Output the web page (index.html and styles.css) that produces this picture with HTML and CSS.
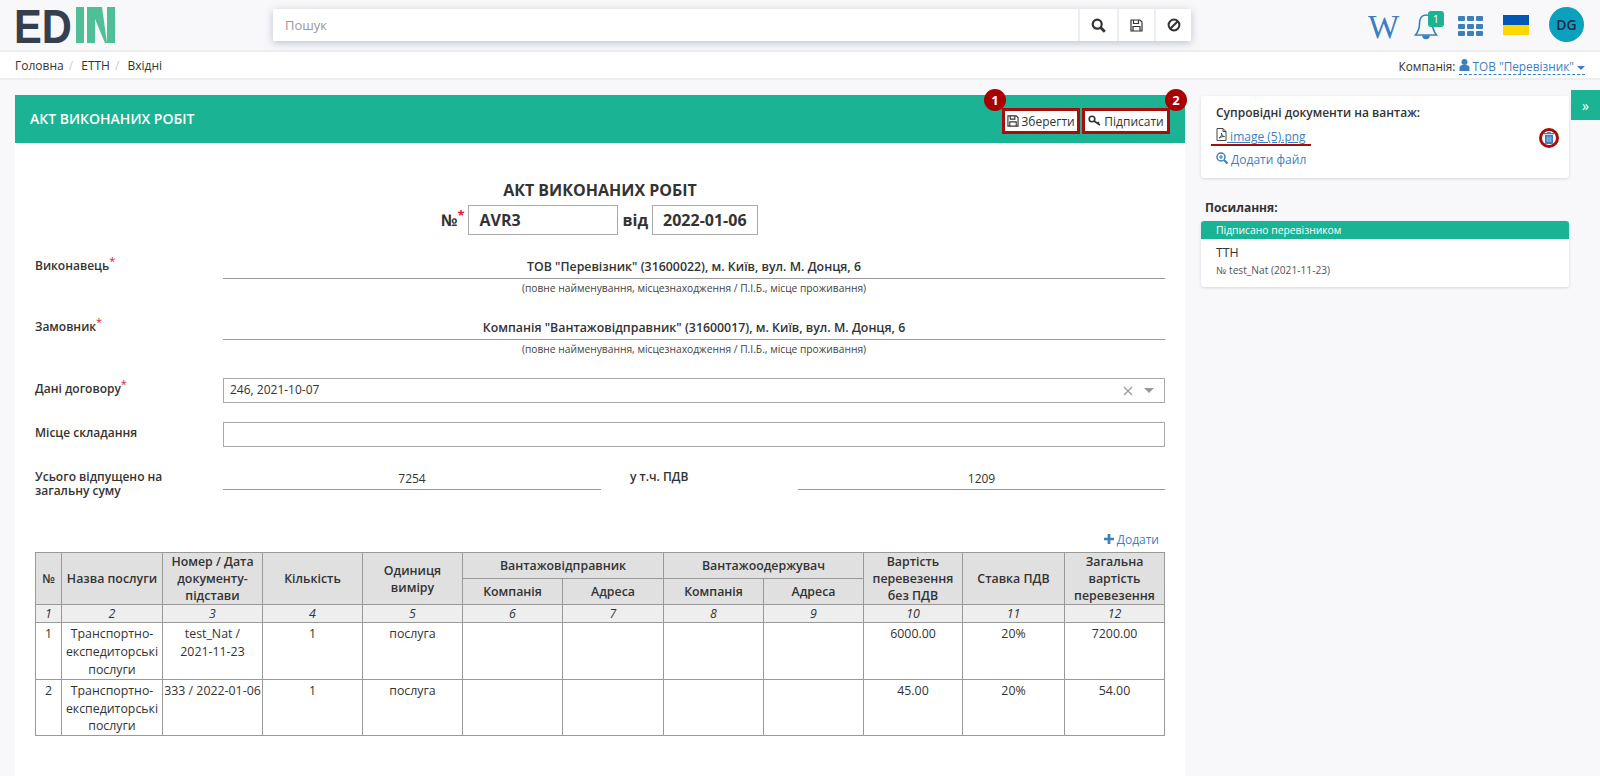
FILE: index.html
```html
<!DOCTYPE html>
<html lang="uk">

<head>
    <meta charset="UTF-8">
    <meta name="viewport" content="width=device-width, initial-scale=1.0">
    <title>Акт виконаних робіт</title>
    <link rel="stylesheet" href="styles.css">
</head>

<body>
    <header class="topbar">
        <div class="logo">
            <span class="logo-text">ED</span>
            <svg width="39" height="36" viewBox="0 0 39 36" fill="#4fbf97">
                <rect x="0" y="0" width="8" height="36"></rect>
                <rect x="11" y="0" width="8" height="36"></rect>
                <polygon points="19,0 26,0 31,36 29,36 19,12"></polygon>
                <rect x="31" y="0" width="8" height="36"></rect>
            </svg>
        </div>
        <div class="search">
            <input class="search-input" type="text" placeholder="Пошук">
            <button class="search-btn btn-find">
                <svg width="15" height="15" viewBox="0 0 15 15" fill="none" stroke="#333" stroke-width="2.2"><circle cx="6.2" cy="6.2" r="4.5"></circle><path d="M9.6 9.6l4.2 4.2" stroke-width="2.8"></path></svg>
            </button>
            <button class="search-btn">
                <svg width="13" height="13" viewBox="0 0 13 13" fill="none" stroke="#333" stroke-width="1.2"><path d="M1 1h9l2 2v9H1z"></path><path d="M3.5 1v3.5h5V1M3 12V7.5h7V12"></path></svg>
            </button>
            <button class="search-btn">
                <svg width="14" height="14" viewBox="0 0 14 14" fill="none" stroke="#333" stroke-width="2"><circle cx="7" cy="7" r="5.4"></circle><path d="M3.2 10.8l7.6-7.6"></path></svg>
            </button>
        </div>
        <div class="top-icons">
            <span class="wiki">W</span>
            <span class="bell">
                <svg width="24" height="27" viewBox="0 0 24 27" fill="none" stroke="#3b7fbf" stroke-width="1.6"><path d="M12 1c-4.5 0-6.5 4-6.5 8.5 0 6-2 9-4 11.5h21c-2-2.5-4-5.5-4-11.500C18.5 5 16.5 1 12 1z"></path><path d="M9 21.5a3 3 0 0 0 6 0" fill="#3b7fbf"></path></svg>
                <span class="bell-badge">1</span>
            </span>
            <span class="apps">
                <i></i><i></i><i></i><i></i><i></i><i></i><i></i><i></i><i></i>
            </span>
            <span class="flag"></span>
            <span class="avatar">DG</span>
        </div>
    </header>

    <nav class="crumbs">
        <div class="crumb-list">
            <span>Головна</span><span class="sep">/</span>
            <span>ЕТТН</span><span class="sep">/</span>
            <span>Вхідні</span>
        </div>
        <div class="company">
            Компанія:
            <span class="company-link">
                <svg width="11" height="12" viewBox="0 0 11 12" fill="#3b7fbf"><circle cx="5.5" cy="3" r="3"></circle><path d="M0.5 12V9c0-2 1.5-3 3-3h4c1.5 0 3 1 3 3v3z"></path></svg>
                ТОВ "Перевізник"
                <span class="caret"></span>
            </span>
        </div>
    </nav>

    <main class="page">
        <section class="panel">
            <div class="panel-head">
                <h2>АКТ ВИКОНАНИХ РОБІТ</h2>
                <div class="actions">
                    <button class="act-btn btn-save">
                        <svg width="12" height="12" viewBox="0 0 13 13" fill="none" stroke="#333" stroke-width="1.2"><path d="M1 1h9l2 2v9H1z"></path><path d="M3.5 1v3.5h5V1M3 12V7.5h7V12"></path></svg>
                        Зберегти
                        <span class="mark mark-one">1</span>
                    </button>
                    <button class="act-btn btn-sign">
                        <svg width="14" height="12" viewBox="0 0 14 12" fill="none" stroke="#333" stroke-width="1.6"><circle cx="4" cy="4" r="2.8"></circle><path d="M6 6l6 4M9.5 8.3L11 7"></path></svg>
                        Підписати
                        <span class="mark mark-two">2</span>
                    </button>
                </div>
            </div>

            <div class="form">
                <h1 class="doc-title">АКТ ВИКОНАНИХ РОБІТ</h1>
                <div class="doc-number">
                    <span>№<sup class="req">*</sup></span>
                    <span class="num-box num-wide">AVR3</span>
                    <span>від</span>
                    <span class="num-box">2022-01-06</span>
                </div>

                <div class="row party">
                    <label class="row-label">Виконавець<sup class="req">*</sup></label>
                    <div class="row-field">
                        <div class="party-name">ТОВ "Перевізник" (31600022), м. Київ, вул. М. Донця, 6</div>
                        <div class="hint">(повне найменування, місцезнаходження / П.І.Б., місце проживання)</div>
                    </div>
                </div>
                <div class="row party">
                    <label class="row-label">Замовник<sup class="req">*</sup></label>
                    <div class="row-field">
                        <div class="party-name">Компанія "Вантажовідправник" (31600017), м. Київ, вул. М. Донця, 6</div>
                        <div class="hint">(повне найменування, місцезнаходження / П.І.Б., місце проживання)</div>
                    </div>
                </div>

                <div class="row contract">
                    <label class="row-label">Дані договору<sup class="req">*</sup></label>
                    <div class="row-field select-box">
                        <span>246, 2021-10-07</span>
                        <span class="select-tools">
                            <svg width="10" height="10" viewBox="0 0 10 10" stroke="#999" stroke-width="1.3"><path d="M1 1l8 8M9 1l-8 8"></path></svg>
                            <span class="select-caret"></span>
                        </span>
                    </div>
                </div>
                <div class="row place">
                    <label class="row-label">Місце складання</label>
                    <div class="row-field text-box"></div>
                </div>
                <div class="row totals">
                    <label class="row-label">Усього відпущено на загальну суму</label>
                    <div class="total-value">7254</div>
                    <label class="vat-label">у т.ч. ПДВ</label>
                    <div class="total-value vat-value">1209</div>
                </div>

                <div class="add-row">
                    <a class="link">
                        <svg width="10" height="10" viewBox="0 0 11 11" fill="#3b7fbf"><path d="M4 0h3v4h4v3H7v4H4V7H0V4h4z"></path></svg>
                        Додати
                    </a>
                </div>

                <table class="goods">
                    <colgroup>
                        <col class="c-num"><col class="c-wide"><col><col><col><col><col class="c-wide"><col><col><col class="c-narrow"><col class="c-max"><col>
                    </colgroup>
                    <thead>
                        <tr>
                            <th rowspan="2">№</th>
                            <th rowspan="2">Назва послуги</th>
                            <th rowspan="2">Номер / Дата документу-підстави</th>
                            <th rowspan="2">Кількість</th>
                            <th rowspan="2">Одиниця виміру</th>
                            <th colspan="2">Вантажовідправник</th>
                            <th colspan="2">Вантажоодержувач</th>
                            <th rowspan="2">Вартість перевезення без ПДВ</th>
                            <th rowspan="2">Ставка ПДВ</th>
                            <th rowspan="2">Загальна вартість перевезення</th>
                        </tr>
                        <tr>
                            <th>Компанія</th><th>Адреса</th><th>Компанія</th><th>Адреса</th>
                        </tr>
                        <tr class="h-index">
                            <td>1</td><td>2</td><td>3</td><td>4</td><td>5</td><td>6</td><td>7</td><td>8</td><td>9</td><td>10</td><td>11</td><td>12</td>
                        </tr>
                    </thead>
                    <tbody>
                        <tr>
                            <td>1</td><td>Транспортно-експедиторські послуги</td><td>test_Nat /<br>2021-11-23</td><td>1</td><td>послуга</td>
                            <td></td><td></td><td></td><td></td><td>6000.00</td><td>20%</td><td>7200.00</td>
                        </tr>
                        <tr class="last-row">
                            <td>2</td><td>Транспортно-експедиторські послуги</td><td>333 / 2022-01-06</td><td>1</td><td>послуга</td>
                            <td></td><td></td><td></td><td></td><td>45.00</td><td>20%</td><td>54.00</td>
                        </tr>
                    </tbody>
                </table>
            </div>
        </section>

        <aside class="side">
            <div class="card docs">
                <h3>Супровідні документи на вантаж:</h3>
                <div class="file-row">
                    <a class="link file-link">
                        <svg width="11" height="13" viewBox="0 0 11 13" fill="none" stroke="#444" stroke-width="1"><path d="M1 .5h6l3 3v9H1z"></path><path d="M7 .5v3h3M3 10c2-1 3-3 2.5-5 0 2 1.5 3.5 3 3.500-2 0-3.500.5-5.500 1.500z"></path></svg>
                        image (5).png
                    </a>
                    <span class="trash">
                        <svg width="10" height="12" viewBox="0 0 10 12" fill="#3b7fbf"><path d="M3.5 0h3l.5 1h3v1.200H0V1h3zM1 3h8v8c0 .6-.4 1-1 1H2c-.6 0-1-.4-1-1z"></path><path d="M3.2 4.500v5.500M5 4.500v5.500M6.800 4.500v5.500" stroke="#cfe0f0" stroke-width=".7"></path></svg>
                    </span>
                </div>
                <a class="link add-file">
                    <svg width="12" height="12" viewBox="0 0 12 12" fill="none" stroke="#3b7fbf" stroke-width="1.5"><circle cx="5" cy="5" r="4"></circle><path d="M8 8l3.5 3.5" stroke-width="2"></path><path d="M3 5h4M5 3v4" stroke-width="1.2"></path></svg>
                    Додати файл
                </a>
            </div>

            <h4 class="links-title">Посилання:</h4>
            <div class="card linked">
                <div class="linked-status">Підписано перевізником</div>
                <div class="linked-body">
                    <div class="linked-name">ТТН</div>
                    <div class="linked-sub">№ test_Nat (2021-11-23)</div>
                </div>
            </div>
        </aside>

        <button class="side-toggle">»</button>
    </main>
</body>

</html>
```

FILE: styles.css
```css
* {
    margin: 0;
    padding: 0;
    box-sizing: border-box;
    font-family: "Open Sans", sans-serif;
}

html,
body {
    height: 100%;
    overflow: hidden;
}

body {
    background-color: #f8f8fb;
    color: #333;
    font-size: 13px;
    line-height: 18px;
}

button {
    background: white;
    border: 0;
    color: #333;
}

.link {
    color: #3b7fbf;
}

/* top bar */
.topbar {
    height: 52px;
    border-bottom: 2px solid #eceef0;
    display: flex;
    align-items: flex-start;
    position: relative;
}

.logo {
    margin: 7px 0 0 14px;
    width: 101px;
    height: 36px;
    flex: none;
    display: flex;
    justify-content: space-between;
    align-items: flex-start;
}

.logo-text {
    display: inline-block;
    width: 58px;
    white-space: nowrap;
    font-family: "Liberation Sans", sans-serif;
    font-size: 49px;
    font-weight: 700;
    line-height: 39px;
    color: #363f4d;
    transform: scaleX(0.85);
    transform-origin: left;
}

.search {
    margin: 9px 0 0 158px;
    width: 918px;
    height: 32px;
    display: flex;
    background: white;
    box-shadow: 0 2px 8px rgba(60, 70, 100, 0.3);
}

.search-input {
    flex: 1;
    border: 0;
    outline: 0;
    padding-left: 12px;
    font-size: 13px;
    min-width: 0;
}

.search-input::placeholder {
    color: #999;
}

.search-btn {
    width: 37px;
    border-left: 2px solid #eceef0;
    display: flex;
    align-items: center;
    justify-content: center;
}

.btn-find {
    width: 39px;
}

.top-icons {
    margin-left: auto;
    padding: 7px 16px 0 0;
    display: flex;
    align-items: flex-start;
}

.wiki {
    font-family: "Liberation Serif", serif;
    font-size: 33px;
    line-height: 40px;
    color: #3b7fbf;
    width: 32px;
}

.bell {
    margin: 7px 0 0 14px;
    width: 30px;
    height: 27px;
    position: relative;
}

.bell-badge {
    position: absolute;
    left: 14px;
    top: -3px;
    width: 16px;
    height: 16px;
    border-radius: 3px;
    background-color: #1ab394;
    color: white;
    font-size: 11px;
    line-height: 16px;
    text-align: center;
}

.apps {
    margin: 9px 0 0 14px;
    width: 25px;
    display: grid;
    grid-template-columns: repeat(3, 7px);
    grid-auto-rows: 5px;
    gap: 2.5px 2px;
}

.apps i {
    background-color: #3b7fbf;
    border-radius: 1px;
}

.flag {
    margin: 8px 0 0 20px;
    width: 26px;
    height: 20px;
    background: linear-gradient(#0057b7 50%, #ffd700 50%);
}

.avatar {
    margin: 0 0 0 20px;
    width: 35px;
    height: 35px;
    border-radius: 50%;
    background-color: #0ba0bb;
    color: #1c2a4a;
    font-size: 14px;
    font-weight: 600;
    line-height: 35px;
    text-align: center;
}

/* breadcrumbs */
.crumbs {
    height: 28px;
    background: white;
    border-bottom: 2px solid #eceef0;
    padding: 5px 15px 0;
    display: flex;
    justify-content: space-between;
    font-size: 12px;
}

.crumb-list .sep {
    color: #ccc;
    margin: 0 6px 0 5px;
}

.crumb-list .sep + span {
    margin-left: -1px;
}

.company {
    font-size: 11.8px;
}

.company-link {
    color: #3b7fbf;
    border-bottom: 1px dashed #3b7fbf;
    display: inline-block;
    height: 18px;
}

.caret {
    display: inline-block;
    border: 4px solid transparent;
    border-top-color: #3b7fbf;
    border-bottom: 0;
    vertical-align: middle;
}

/* main layout */
.page {
    display: flex;
    align-items: flex-start;
    padding: 15px 0 0 15px;
    position: relative;
}

.panel {
    width: 1170px;
    height: 700px;
    background: white;
    flex: none;
}

.panel-head {
    height: 48px;
    background-color: #1ab394;
    padding: 14px 15px 0;
    display: flex;
    justify-content: space-between;
}

.panel-head h2 {
    color: white;
    font-size: 14px;
    font-weight: 600;
    line-height: 20px;
}

.actions {
    margin-top: -1px;
    display: flex;
    gap: 2px;
    height: 26px;
}

.act-btn {
    height: 26px;
    border: 3px solid #a80d0d;
    font-size: 12px;
    display: flex;
    align-items: center;
    justify-content: center;
    gap: 2px;
    position: relative;
    white-space: nowrap;
}

.btn-save {
    width: 78px;
}

.btn-sign {
    width: 88px;
}

.mark {
    position: absolute;
    top: -22px;
    width: 22px;
    height: 22px;
    border-radius: 50%;
    background-color: #a80000;
    color: white;
    font-size: 13px;
    font-weight: 700;
    line-height: 22px;
    text-align: center;
}

.mark-one {
    left: -21px;
}

.mark-two {
    right: -20px;
}

/* form */
.form {
    padding: 36px 20px 0;
}

.doc-title {
    font-size: 16px;
    font-weight: 700;
    line-height: 22px;
    text-align: center;
}

.doc-number {
    margin-top: 4px;
    display: flex;
    justify-content: center;
    align-items: center;
    gap: 4px;
    font-size: 16px;
    font-weight: 700;
    padding-right: 1px;
}

.num-box {
    height: 30px;
    width: 106px;
    border: 1px solid #aaa;
    line-height: 28px;
    padding-left: 10px;
}

.num-wide {
    width: 150px;
}

.req {
    color: #e4173f;
    font-size: 11px;
    font-weight: 400;
    line-height: 0;
}

.doc-number .req {
    font-size: 13px;
    font-weight: 700;
}

.row {
    display: flex;
}

.row-label {
    width: 188px;
    flex: none;
    font-size: 12px;
    font-weight: 600;
    line-height: 14px;
}

.row-field {
    flex: 1;
}

.party {
    margin-top: 22px;
    height: 39px;
}

.party .row-label {
    padding-top: 2px;
}

.party-name {
    border-bottom: 1px solid #999;
    font-size: 12.35px;
    font-weight: 600;
    height: 22px;
    line-height: 20px;
    text-align: center;
}

.hint {
    font-size: 10.25px;
    color: #444;
    line-height: 18px;
    text-align: center;
}

.contract {
    margin-top: 21px;
}

.select-box,
.text-box {
    height: 25px;
    border: 1px solid #aaa;
    font-size: 12px;
    line-height: 22px;
    padding-left: 6px;
}

.select-box {
    display: flex;
    justify-content: space-between;
}

.select-tools {
    display: flex;
    align-items: center;
    gap: 11px;
    padding-right: 10px;
}

.select-caret {
    border: 5px solid transparent;
    border-top-color: #999;
    border-bottom: 0;
}

.contract .row-label,
.place .row-label {
    padding-top: 4px;
}

.place {
    margin-top: 19px;
}

.totals {
    margin-top: 23px;
}

.totals .row-label {
    padding-right: 30px;
}

.total-value {
    width: 378px;
    height: 20px;
    border-bottom: 1px solid #999;
    font-size: 12px;
    line-height: 17px;
    text-align: center;
}

.vat-label {
    width: 197px;
    padding-left: 29px;
    font-size: 12px;
    font-weight: 600;
    line-height: 14px;
}

.vat-value {
    width: 367px;
}

.add-row {
    margin-top: 33px;
    padding-right: 6px;
    text-align: right;
    font-size: 12px;
}

/* table */
.goods {
    margin-top: 3px;
    width: 1129px;
    table-layout: fixed;
    border-collapse: collapse;
    font-size: 12.35px;
    line-height: 18px;
    text-align: center;
}

.goods col {
    width: 100px;
}

.goods col.c-num {
    width: 26px;
}

.goods col.c-narrow {
    width: 99px;
}

.goods col.c-wide {
    width: 101px;
}

.goods col.c-max {
    width: 102px;
}

.goods th,
.goods td {
    border: 1px solid #999;
    padding: 0 1px;
}

.goods th {
    background-color: #e0e0e0;
    font-weight: 600;
    line-height: 17px;
    height: 26px;
}

.h-index td {
    background-color: #eee;
    font-style: italic;
    height: 18px;
    line-height: 16px;
}

.goods tbody td {
    height: 57px;
    vertical-align: top;
    padding-top: 2px;
}

.goods .last-row td {
    height: 56px;
    line-height: 17.5px;
}

/* right column */
.side {
    width: 368px;
    margin-left: 16px;
    margin-top: 1px;
    flex: none;
}

.card {
    background: white;
    border-radius: 3px;
    box-shadow: 0 1px 3px rgba(60, 70, 100, 0.18);
}

.docs {
    height: 82px;
    padding: 8px 15px 0;
    font-size: 12px;
}

.docs h3 {
    font-size: 12px;
    font-weight: 600;
    line-height: 18px;
}

.file-row {
    margin-top: 6px;
    display: flex;
    justify-content: space-between;
    align-items: flex-start;
    height: 20px;
}

.file-link {
    border-bottom: 2px solid #a80d0d;
    margin-left: -5px;
    padding: 0 5px;
    width: 100px;
    height: 18px;
    white-space: nowrap;
    text-decoration: underline;
    text-decoration-color: #3b7fbf;
}

.trash {
    width: 20px;
    height: 20px;
    margin-right: -5px;
    border: 3px solid #a80d0d;
    border-radius: 50%;
    display: flex;
    align-items: center;
    justify-content: center;
}

.add-file {
    display: block;
    margin-top: 3px;
}

.links-title {
    margin: 21px 0 0 4px;
    font-size: 12px;
    font-weight: 700;
    line-height: 18px;
}

.linked {
    margin-top: 4px;
    height: 66px;
    overflow: hidden;
}

.linked-status {
    height: 18px;
    background-color: #1ab394;
    color: white;
    font-size: 10.35px;
    line-height: 18px;
    padding-left: 15px;
}

.linked-body {
    padding: 5px 15px 0;
}

.linked-name {
    font-size: 12.35px;
    line-height: 18px;
}

.linked-sub {
    font-size: 10.2px;
    line-height: 17px;
    color: #555;
}

.side-toggle {
    position: absolute;
    right: 0;
    top: 10px;
    width: 29px;
    height: 30px;
    background-color: #1ab394;
    color: white;
    font-size: 14px;
}
```
